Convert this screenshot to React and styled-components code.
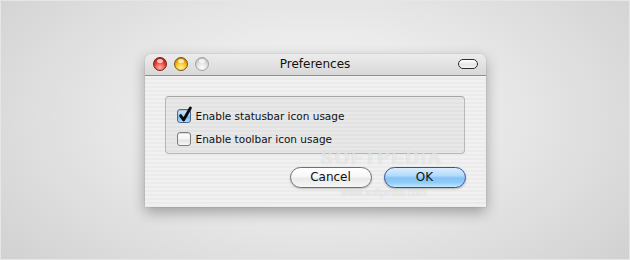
import React from "react";
import styled, { createGlobalStyle, css } from "styled-components";

const Global = createGlobalStyle`
  html, body { margin: 0; padding: 0; }
  body { font-family: "DejaVu Sans", "Liberation Sans", sans-serif; }
`;

const Page = styled.div`
  width: 630px;
  height: 260px;
  display: flex;
  align-items: center;
  justify-content: center;
  background: radial-gradient(ellipse 70% 95% at 50% 45%, #f4f4f4 0%, #ebebeb 35%, #d9d9d9 75%, #cdcdcd 100%);
  box-sizing: border-box;
  border: 1px solid #e6e6e6;
`;

const Window = styled.div`
  position: relative;
  width: 341px;
  display: flex;
  flex-direction: column;
  border-radius: 6px 6px 0 0;
  box-shadow: 0 5px 14px rgba(0, 0, 0, 0.32), 0 0 1px rgba(0, 0, 0, 0.35);
  overflow: hidden;
`;

const TitleBar = styled.div`
  height: 22px;
  display: grid;
  grid-template-columns: 1fr auto 1fr;
  align-items: center;
  padding: 0 8px;
  background: linear-gradient(to bottom, #ececec 0%, #e2e2e2 50%, #d8d8d8 100%);
  border-bottom: 1px solid #8e8e8e;
  box-sizing: border-box;
`;

const Lights = styled.div`
  display: flex;
  gap: 7px;
`;

const lightColors = {
  red: css`
    background: radial-gradient(circle at 50% 80%, #ffb8ae 0%, #f0473d 45%, #a8140e 92%);
    border: 1px solid #6e221d;
  `,
  yellow: css`
    background: radial-gradient(circle at 50% 80%, #fff3a8 0%, #f8c41c 45%, #b87004 92%);
    border: 1px solid #7f520c;
  `,
  grey: css`
    background: radial-gradient(circle at 50% 80%, #ffffff 0%, #e2e2e2 45%, #b5b5b5 95%);
    border: 1px solid #a2a2a2;
  `,
};

const Light = styled.span`
  position: relative;
  width: 14px;
  height: 14px;
  border-radius: 50%;
  box-sizing: border-box;
  ${(p) => lightColors[p.$color]}
  &::after {
    content: "";
    position: absolute;
    left: 3px;
    top: 1px;
    width: 6px;
    height: 4px;
    border-radius: 50%;
    background: rgba(255, 255, 255, 0.7);
  }
`;

const Title = styled.div`
  font-size: 12px;
  color: #111;
`;

const Pill = styled.span`
  justify-self: end;
  width: 20px;
  height: 10px;
  border-radius: 6px;
  border: 1px solid #2e2e2e;
  box-sizing: border-box;
  background: linear-gradient(to bottom, #ffffff 0%, #e6e6e6 60%, #f6f6f6 100%);
`;

const Body = styled.div`
  position: relative;
  height: 131px;
  box-sizing: border-box;
  padding: 20px 21px 19px 20px;
  display: flex;
  flex-direction: column;
  gap: 13px;
  background: repeating-linear-gradient(to bottom, #f1f1f1 0px, #f1f1f1 2px, #ebebeb 2px, #ebebeb 4px);
`;

const Group = styled.div`
  height: 58px;
  box-sizing: border-box;
  border: 1px solid #b7b7b7;
  border-top-color: #a6a6a6;
  border-radius: 4px;
  background: rgba(0, 0, 0, 0.035);
  padding: 12px 11px 0 11px;
  display: flex;
  flex-direction: column;
  gap: 9px;
`;

const Row = styled.label`
  display: flex;
  align-items: center;
  gap: 5px;
  height: 14px;
  font-size: 10.5px;
  color: #111;
`;

const Box = styled.span`
  position: relative;
  flex: none;
  width: 14px;
  height: 14px;
  box-sizing: border-box;
  border-radius: 3px;
  border: 1px solid ${(p) => (p.$checked ? "#4a6890" : "#7e7e7e")};
  background: ${(p) =>
    p.$checked
      ? "linear-gradient(to bottom, #cfe6fb 0%, #9ccdf5 50%, #6fb2ee 55%, #b4e0fd 100%)"
      : "linear-gradient(to bottom, #ffffff 0%, #f4f4f4 50%, #e3e3e3 60%, #f8f8f8 100%)"};
  box-shadow: inset 0 1px 1px rgba(0, 0, 0, 0.15);
`;

const Check = styled.svg`
  position: absolute;
  left: 0px;
  top: -3px;
  overflow: visible;
`;

const Buttons = styled.div`
  display: flex;
  justify-content: flex-end;
  gap: 12px;
  margin-right: -1px;
`;

const Button = styled.button`
  width: 82px;
  height: 21px;
  padding: 0;
  border-radius: 11px;
  font-family: "DejaVu Sans", "Liberation Sans", sans-serif;
  font-size: 12px;
  color: #111;
  box-sizing: border-box;
  ${(p) =>
    p.$primary
      ? css`
          border: 1px solid #3b4f9a;
          background: linear-gradient(to bottom, #dbeefd 0%, #b4dafa 40%, #86c4f5 52%, #8dcaf7 75%, #c2e8ff 100%);
          box-shadow: 0 1px 2px rgba(0, 0, 0, 0.25);
        `
      : css`
          border: 1px solid #6f6f6f;
          background: linear-gradient(to bottom, #ffffff 0%, #f7f7f7 45%, #e9e9e9 55%, #f6f6f6 100%);
          box-shadow: 0 1px 2px rgba(0, 0, 0, 0.2);
        `}
`;

const Watermark = styled.div`
  position: absolute;
  left: ${(p) => p.$x}px;
  top: ${(p) => p.$y}px;
  height: ${(p) => p.$h}px;
  line-height: ${(p) => p.$h}px;
  font-family: "Liberation Sans", sans-serif;
  font-size: ${(p) => p.$size}px;
  font-weight: ${(p) => (p.$bold ? 700 : 400)};
  color: rgba(255, 255, 255, 0.6);
  text-shadow: 0 0 1px rgba(0, 0, 0, 0.18);
  letter-spacing: ${(p) => (p.$bold ? 1.5 : 0)}px;
  pointer-events: none;
  white-space: nowrap;
`;

function Checkbox({ checked, label }) {
  return (
    <Row>
      <Box $checked={checked}>
        {checked && (
          <Check width="14" height="16" viewBox="0 0 14 16">
            <path
              d="M2.6 8.6 L5.6 13 L12.4 1"
              fill="none"
              stroke="#0a0a0a"
              strokeWidth="2.8"
              strokeLinecap="round"
              strokeLinejoin="round"
            />
          </Check>
        )}
      </Box>
      {label}
    </Row>
  );
}

export default function App() {
  return (
    <>
      <Global />
      <Page>
        <Window>
          <TitleBar>
            <Lights>
              <Light $color="red" />
              <Light $color="yellow" />
              <Light $color="grey" />
            </Lights>
            <Title>Preferences</Title>
            <Pill />
          </TitleBar>
          <Body>
            <Group>
              <Checkbox checked label="Enable statusbar icon usage" />
              <Checkbox label="Enable toolbar icon usage" />
            </Group>
            <Buttons>
              <Button>Cancel</Button>
              <Button $primary>OK</Button>
            </Buttons>
            <Watermark $x={176} $y={75} $h={14} $size={19} $bold>
              SOFTPEDIA
            </Watermark>
            <Watermark $x={196} $y={112} $h={10} $size={10}>
              www.softpedia.com
            </Watermark>
          </Body>
        </Window>
      </Page>
    </>
  );
}
